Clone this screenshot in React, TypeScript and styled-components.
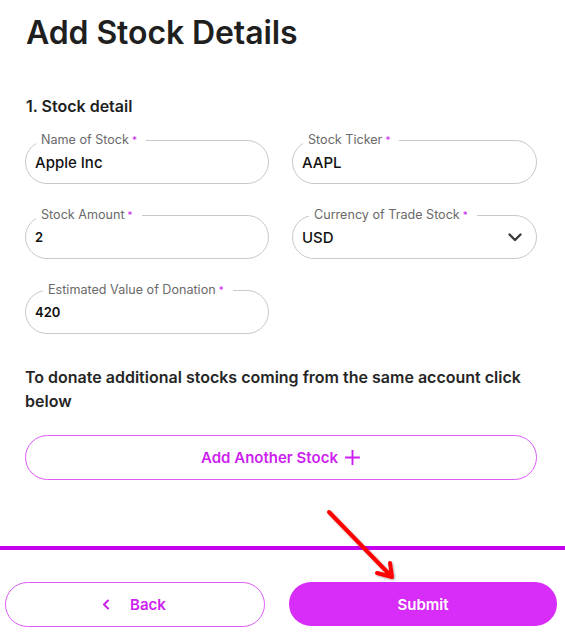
import React from 'react';
import styled, { createGlobalStyle } from 'styled-components';

const colors = {
  text: '#1f1f1f',
  label: '#6a6a6a',
  border: '#c9c9c9',
  magenta: '#cc1ff0',
  magentaSoft: '#dd5cf7',
  fill: '#d82cf9',
  rule: '#c400ef',
};

const GlobalStyle = createGlobalStyle`
  html, body {
    margin: 0;
    padding: 0;
    background: #fff;
  }
  body {
    font-family: Inter, 'Noto Sans', sans-serif;
    color: ${colors.text};
  }
`;

const Page = styled.div`
  position: relative;
  width: 565px;
  height: 634px;
  overflow: hidden;
`;

const Content = styled.div`
  padding: 15px 28px 0 25px;
`;

const Title = styled.h1`
  margin: 0;
  font-size: 32px;
  line-height: 36px;
  font-weight: 600;
  letter-spacing: -0.1px;
  padding-left: 1px;
`;

const Section = styled.h2`
  margin: 46px 0 0 1px;
  font-size: 16px;
  line-height: 18px;
  font-weight: 600;
`;

const Grid = styled.div`
  display: grid;
  grid-template-columns: 244px 245px;
  column-gap: 23px;
  row-gap: 31px;
  margin-top: 25px;
`;

const Field = styled.div`
  position: relative;
  height: 44px;
  border: 1px solid ${colors.border};
  border-radius: 22px;
  box-sizing: border-box;
  display: flex;
  align-items: center;
  padding: 0 14px 0 9px;
`;

const Label = styled.span<{ offset: number }>`
  position: absolute;
  top: -9px;
  left: ${p => p.offset}px;
  padding: 0 9px 0 5px;
  background: #fff;
  font-size: 12.6px;
  line-height: 16px;
  color: ${colors.label};
  white-space: nowrap;
`;

const Star = styled.span`
  color: ${colors.magenta};
  font-size: 10px;
  vertical-align: top;
  margin-left: 3px;
`;

const Value = styled.span<{ small?: boolean }>`
  flex: 1;
  font-size: ${p => (p.small ? '13px' : '15px')};
  font-weight: ${p => (p.small ? 600 : 500)};
  color: #111;
`;

const Chevron = styled.svg`
  width: 14px;
  height: 9px;
`;

const Note = styled.p`
  margin: 31px 0 0 0;
  font-size: 16px;
  line-height: 24px;
  font-weight: 600;
  color: #262626;
`;

const OutlineButton = styled.button`
  display: flex;
  align-items: center;
  justify-content: center;
  gap: 6px;
  height: 45px;
  box-sizing: border-box;
  border: 1px solid ${colors.magentaSoft};
  border-radius: 23px;
  background: #fff;
  color: ${colors.magenta};
  font-family: inherit;
  font-size: 15px;
  font-weight: 600;
  cursor: pointer;
`;

const AddButton = styled(OutlineButton)`
  width: 100%;
  margin-top: 22px;
`;

const Rule = styled.div`
  height: 4px;
  background: ${colors.rule};
  margin-top: 66px;
`;

const Footer = styled.div`
  display: grid;
  grid-template-columns: 260px 268px;
  column-gap: 24px;
  padding: 32px 0 0 5px;
`;

const BackButton = styled(OutlineButton)`
  gap: 20px;
  padding-right: 8px;
`;

const SubmitButton = styled.button`
  height: 44px;
  border: none;
  border-radius: 22px;
  background: ${colors.fill};
  color: #fff;
  font-family: inherit;
  font-size: 15px;
  font-weight: 600;
  cursor: pointer;
`;

const Arrow = styled.svg`
  position: absolute;
  left: 0;
  top: 0;
  width: 565px;
  height: 634px;
  pointer-events: none;
`;

type FieldDef = {
  label: string;
  value: string;
  offset: number;
  small?: boolean;
  select?: boolean;
};

const fields: FieldDef[] = [
  { label: 'Name of Stock', value: 'Apple Inc', offset: 10 },
  { label: 'Stock Ticker', value: 'AAPL', offset: 10 },
  { label: 'Stock Amount', value: '2', offset: 10, small: true },
  { label: 'Currency of Trade Stock', value: 'USD', offset: 16, select: true },
  { label: 'Estimated Value of Donation', value: '420', offset: 17, small: true },
];

const App: React.FC = () => {
  return (
    <Page>
      <GlobalStyle />
      <Content>
        <Title>Add Stock Details</Title>
        <Section>1. Stock detail</Section>
        <Grid>
          {fields.map(f => (
            <Field key={f.label}>
              <Label offset={f.offset}>
                {f.label}
                <Star>*</Star>
              </Label>
              <Value small={f.small}>{f.value}</Value>
              {f.select && (
                <Chevron viewBox="0 0 14 9">
                  <path d="M1.5 1.5 L7 7 L12.5 1.5" fill="none" stroke="#3a3a3a" strokeWidth="2.4" strokeLinecap="round" strokeLinejoin="round" />
                </Chevron>
              )}
            </Field>
          ))}
        </Grid>
        <Note>To donate additional stocks coming from the same account click below</Note>
        <AddButton>
          Add Another Stock
          <svg width="17" height="17" viewBox="0 0 16 16">
            <path d="M8 1 V15 M1 8 H15" stroke={colors.magenta} strokeWidth="1.8" />
          </svg>
        </AddButton>
      </Content>
      <Rule />
      <Footer>
        <BackButton>
          <svg width="8" height="11" viewBox="0 0 8 11">
            <path d="M6 1.5 L2 5.5 L6 9.5" fill="none" stroke={colors.magenta} strokeWidth="2" strokeLinecap="round" strokeLinejoin="round" />
          </svg>
          Back
        </BackButton>
        <SubmitButton>Submit</SubmitButton>
      </Footer>
      <Arrow viewBox="0 0 565 634">
        <defs>
          <filter id="sh" x="-20%" y="-20%" width="140%" height="140%">
            <feDropShadow dx="1" dy="1" stdDeviation="1" floodColor="#000" floodOpacity="0.35" />
          </filter>
        </defs>
        <g filter="url(#sh)" stroke="#ff0000" strokeWidth="4" strokeLinecap="round" fill="none">
          <path d="M329 512 L391 576" />
          <path d="M377 573 L392 577 L390 563" strokeLinejoin="round" />
        </g>
      </Arrow>
    </Page>
  );
};

export default App;
